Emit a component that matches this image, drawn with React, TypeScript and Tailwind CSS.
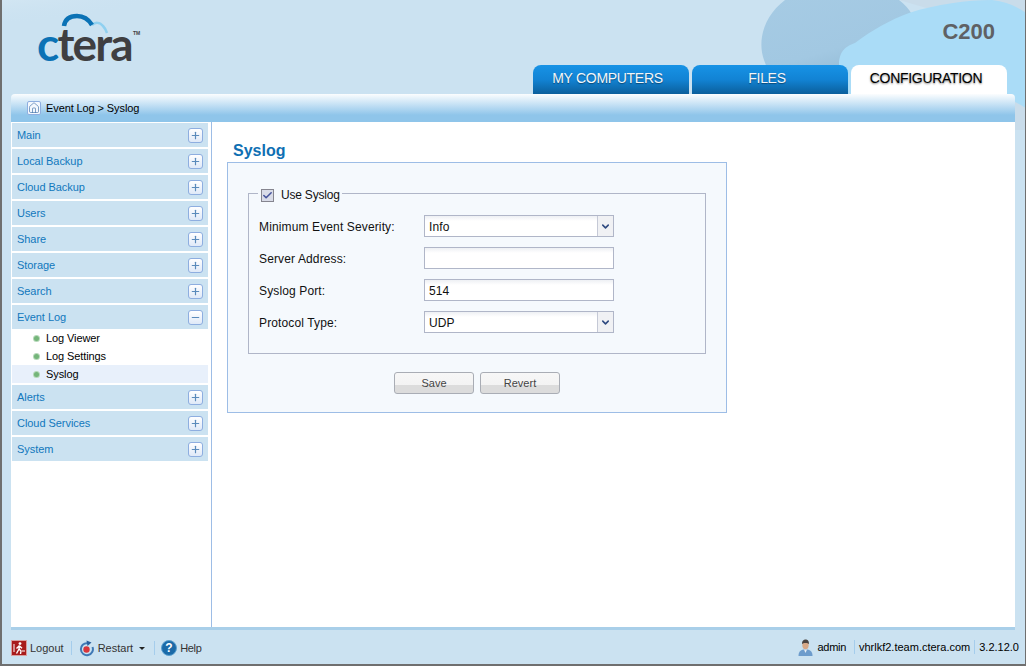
import { Check, ChevronDown, House, Minus, Plus } from 'lucide-react';

const sections = ['Main', 'Local Backup', 'Cloud Backup', 'Users', 'Share', 'Storage', 'Search'];
const lowerSections = ['Alerts', 'Cloud Services', 'System'];
const subItems = ['Log Viewer', 'Log Settings', 'Syslog'];

const HeaderArt = () => (
  <svg className="absolute left-0 top-0" width="1024" height="130" viewBox="0 0 1024 130">
    <defs>
      <radialGradient id="glow" cx="0" cy="0" r="1">
        <stop offset="0" stopColor="#ffffff" />
        <stop offset="1" stopColor="#cbe2f1" stopOpacity="0" />
      </radialGradient>
      <linearGradient id="blob" x1="0" y1="0" x2="0.5" y2="1">
        <stop offset="0" stopColor="#a6cbe4" />
        <stop offset="0.6" stopColor="#a2c8e2" />
        <stop offset="1" stopColor="#8db5d0" />
      </linearGradient>
    </defs>
    <ellipse cx="70" cy="-6" rx="150" ry="34" fill="url(#glow)" />
    <path d="M897 0 H1024 V130 H1000 L1000 30 Z" fill="#c9dcea" />
    <path d="M783 0 C762 16 755 40 762 60 C766 72 772 84 778 94 H850 C885 80 915 58 915 33 C915 20 908 8 897 0 Z" fill="url(#blob)" />
    <path d="M837 65 C837 50 845 46 853 43 C870 30 888 20 907 13 C935 4 965 0 990 0 C1005 2 1016 7 1024 13 V108 C1010 100 1000 95 990 94 H837 Z" fill="#aadcf7" />
  </svg>
);

const Logo = () => (
  <div className="relative h-[54px] w-[104px]">
    <svg className="absolute left-0 top-0" width="104" height="54" viewBox="0 0 104 54">
      <path d="M55 14 C58 11 63 11 66 15 C68 17 69 19 70 22" fill="none" stroke="#8fd0f0" strokeWidth="2.5" />
      <path d="M27 15 C28 8 33 5 40 5 C47 5 52 9 55 14" fill="none" stroke="#0b72b5" strokeWidth="4.5" />
    </svg>
    <div className="absolute left-0 top-[9px] flex font-['Lato',sans-serif] text-[46px] font-bold leading-[47px] tracking-[-1.8px]">
      <span className="text-[#0b72b5]">c</span>
      <span className="text-[#3f3f41]">tera</span>
    </div>
    <span className="absolute left-[96px] top-[19px] font-['Liberation_Sans',sans-serif] text-[5px] font-bold leading-[6px] text-[#3f3f41]">TM</span>
  </div>
);

const ExpandBox = ({ open }: { open?: boolean }) => (
  <div className="flex h-[15px] w-[15px] items-center justify-center rounded-[3px] border border-[#8eaee0] bg-gradient-to-b from-[#ffffff] to-[#dfe9f8]">
    {open ? <Minus size={11} strokeWidth={2.6} className="text-[#5a8abb]" /> : <Plus size={11} strokeWidth={2.6} className="text-[#5a8abb]" />}
  </div>
);

const SideHeader = ({ label, open }: { label: string; open?: boolean }) => (
  <div className="flex h-6 items-center justify-between bg-[#cbe2f1] pl-[5px] pr-[5px] text-[11px] tracking-[-0.05px] text-[#1178bd]">
    <span>{label}</span>
    <ExpandBox open={open} />
  </div>
);

const Field = ({ label, children }: { label: string; children: React.ReactNode }) => (
  <div className="flex h-[22px] items-center">
    <span className="w-[165px] pt-px tracking-[0.13px]">{label}</span>
    {children}
  </div>
);

const Input = ({ value }: { value?: string }) => (
  <div className="flex h-[22px] w-[190px] items-center border border-[#b0b6c8] bg-gradient-to-b from-[#eef0f4] to-white to-[25%] pl-1 pt-[2px] tracking-[0.13px]">
    {value}
  </div>
);

const Select = ({ value }: { value: string }) => (
  <div className="flex h-[22px] w-[190px] items-center border border-[#b0b6c8] bg-gradient-to-b from-[#eef0f4] to-white to-[25%] pl-1 pt-[2px] tracking-[0.13px]">
    <span className="flex-1">{value}</span>
    <div className="-mt-[2px] flex h-[20px] w-4 items-center justify-center border-l border-[#c5c9d6] bg-[#f0f1f4]">
      <ChevronDown size={11} strokeWidth={3.4} className="text-[#2f4a80]" />
    </div>
  </div>
);

const FormButton = ({ label }: { label: string }) => (
  <div className="flex h-[22px] w-20 items-center justify-center rounded-[3px] border border-[#a9adb5] bg-[linear-gradient(#f7f7f7_0%,#f3f3f3_60%,#dcdcdc_60%,#dcdcdc_100%)] text-[11px] text-[#444]">
    {label}
  </div>
);

const Separator = () => <div className="mx-[4px] h-[14px] w-px bg-[#a5cdec]" />;

const LogoutIcon = () => (
  <svg width="16" height="16" viewBox="0 0 16 16">
    <rect x="0.5" y="0.5" width="15" height="15" fill="#a81c1c" stroke="#d9a0a0" />
    <circle cx="9" cy="3.6" r="1.4" fill="#fff" />
    <path d="M8.5 5.5 L5.5 8.5 M8.5 5.5 L8 9 L10 11 L9.5 14 M8 9 L5.5 13.5 M8.6 6 L11 8.2" stroke="#fff" strokeWidth="1.4" fill="none" />
    <path d="M3 4 V12 M11 11 H14" stroke="#fff" strokeWidth="1" />
  </svg>
);

const RestartIcon = () => (
  <svg width="15" height="17" viewBox="0 0 15 17">
    <path d="M8.5 3.2 A6 6 0 1 0 13.5 7" fill="none" stroke="#3f78b5" strokeWidth="2" />
    <path d="M7.5 0.5 L12.5 2.5 L8.5 6 Z" fill="#2a5f9e" />
    <circle cx="7.5" cy="9.5" r="3.2" fill="#d9353a" />
  </svg>
);

const HelpIcon = () => (
  <svg width="16" height="16" viewBox="0 0 16 16">
    <circle cx="8" cy="8" r="7.5" fill="#1b6aa8" stroke="#5aa0d0" />
    <text x="8" y="12.4" textAnchor="middle" fontFamily="Liberation Sans" fontWeight="700" fontSize="12" fill="#fff">?</text>
  </svg>
);

const UserIcon = () => (
  <svg width="15" height="17" viewBox="0 0 15 17">
    <path d="M0.5 17 C0.5 12 3 10.5 7.5 10.5 C12 10.5 14.5 12 14.5 17 Z" fill="#6d9ccc" />
    <path d="M6 10.5 L7.5 14 L9 10.5 Z" fill="#e8eef5" />
    <ellipse cx="7.5" cy="6" rx="3.2" ry="4.2" fill="#d8a988" />
    <path d="M4 5 C4 1.5 6 0.5 7.5 0.5 C9.5 0.5 11 1.5 11 5 C10 3.5 5 3.5 4 5 Z" fill="#4a4340" />
  </svg>
);

export default function App() {
  return (
    <div className="relative flex h-[666px] w-[1026px] flex-col overflow-hidden border-b-2 border-l-2 border-r border-[#6f6f6f] bg-[#cbe2f1] font-['Liberation_Sans',sans-serif] text-[12px] text-[#111]">
      <HeaderArt />
      {/* Header */}
      <div className="relative flex h-[94px] shrink-0 justify-between">
        <div className="pl-[35px] pt-[11px]">
          <Logo />
        </div>
        <div className="flex flex-col items-end">
          <div className="pr-[30px] pt-[19px] text-[22px] font-bold leading-[26px] text-[#5f6164]">C200</div>
          <div className="mt-auto flex gap-[3px] pr-[18px] text-center text-[14px] leading-[27px] tracking-[-0.3px]">
            <div className="h-[29px] w-[156px] rounded-t-[8px] bg-gradient-to-b from-[#1793e6] via-[#1283d4] to-[#0b5f9c] pr-[7px] text-[#f2f6fa] [text-shadow:0_1px_1px_rgba(0,0,0,0.4)]">MY COMPUTERS</div>
            <div className="h-[29px] w-[156px] rounded-t-[8px] bg-gradient-to-b from-[#1793e6] via-[#1283d4] to-[#0b5f9c] pr-[6px] text-[#f2f6fa] [text-shadow:0_1px_1px_rgba(0,0,0,0.4)]">FILES</div>
            <div className="h-[29px] w-[156px] rounded-t-[8px] bg-white pr-[6px] text-black [text-shadow:0_1px_2px_rgba(0,0,0,0.5)]">CONFIGURATION</div>
          </div>
        </div>
      </div>

      <div className="relative ml-[9px] mr-[10px] flex flex-1 flex-col">
        {/* Breadcrumb */}
        <div className="flex h-[28px] shrink-0 items-center gap-[5px] rounded-t-[4px] bg-gradient-to-b from-[#fbfdfe] to-[#8fc5ea] to-[75%] pl-4 text-[11px] tracking-[-0.1px] text-black">
          <div className="flex h-[14px] w-[14px] items-center justify-center rounded-[2px] border border-[#8eaee0] bg-[#f4f8fe]">
            <House size={12} strokeWidth={1.3} className="text-[#3c6ea6]" />
          </div>
          <span>Event Log &gt; Syslog</span>
        </div>

        {/* Body */}
        <div className="flex h-[505px] shrink-0 bg-white">
          <div className="w-[201px] shrink-0 border-r border-[#9dbde6] pl-px pr-[3px] pt-px">
            <div className="flex flex-col gap-[2px]">
              {sections.map((s) => (
                <SideHeader key={s} label={s} />
              ))}
              <div>
                <SideHeader label="Event Log" open />
                <div className="text-[11px] tracking-[-0.1px] text-black">
                  {subItems.map((s) => (
                    <div key={s} className={s === 'Syslog' ? 'flex h-[18px] items-center gap-[7px] bg-[#e8f0fb] pl-[22px]' : 'flex h-[18px] items-center gap-[7px] pl-[22px]'}>
                      <div className="h-[5px] w-[5px] rounded-full bg-[#74b57a] ring-1 ring-[#b5d8b8]" />
                      <span>{s}</span>
                    </div>
                  ))}
                </div>
              </div>
              {lowerSections.map((s) => (
                <SideHeader key={s} label={s} />
              ))}
            </div>
          </div>

          <div className="flex-1 pl-[15px] pt-[19px]">
            <div className="pl-[6px] text-[16px] font-bold leading-[19px] text-[#0f6fb3]">Syslog</div>
            <div className="mt-[2px] h-[251px] w-[500px] border border-[#9dbde6] bg-[#f5f9fd] px-[20px] pt-[30px]">
              <div className="relative flex h-[161px] flex-col gap-[10px] border border-[#b0b6c8] pl-[10px] pt-[21px]">
                <div className="absolute left-[9px] top-[-8px] flex items-center gap-[7px] bg-[#f5f9fd] pl-[3px] pr-[2px] tracking-[-0.2px]">
                  <div className="flex h-[13px] w-[13px] items-center justify-center border border-[#85858f] bg-[#d9dce8]">
                    <Check size={11} strokeWidth={3.4} className="text-[#46549c]" />
                  </div>
                  <span>Use Syslog</span>
                </div>
                <Field label="Minimum Event Severity:"><Select value="Info" /></Field>
                <Field label="Server Address:"><Input /></Field>
                <Field label="Syslog Port:"><Input value="514" /></Field>
                <Field label="Protocol Type:"><Select value="UDP" /></Field>
              </div>
              <div className="mt-[18px] flex justify-center gap-[6px]">
                <FormButton label="Save" />
                <FormButton label="Revert" />
              </div>
            </div>
          </div>
        </div>

        <div className="h-[3px] shrink-0 bg-[#a9cfe9]" />

        {/* Footer */}
        <div className="-mr-[4px] flex flex-1 items-center justify-between text-[11px] text-[#333]">
          <div className="flex items-center pt-[2px]">
            <LogoutIcon />
            <span className="ml-[3px]">Logout</span>
            <div className="ml-[3px]"><Separator /></div>
            <div className="ml-[3px]"><RestartIcon /></div>
            <span className="ml-[4px]">Restart</span>
            <div className="ml-[6px] h-0 w-0 border-x-[3px] border-t-[3px] border-x-transparent border-t-[#222]" />
            <div className="ml-[5px]"><Separator /></div>
            <div className="ml-[2px]"><HelpIcon /></div>
            <span className="ml-[3px] tracking-[-0.3px]">Help</span>
          </div>
          <div className="flex items-center text-black">
            <UserIcon />
            <span className="ml-[5px] tracking-[-0.3px]">admin</span>
            <div className="ml-[4px]"><Separator /></div>
            <span>vhrlkf2.team.ctera.com</span>
            <Separator />
            <span>3.2.12.0</span>
          </div>
        </div>
      </div>
    </div>
  );
}
